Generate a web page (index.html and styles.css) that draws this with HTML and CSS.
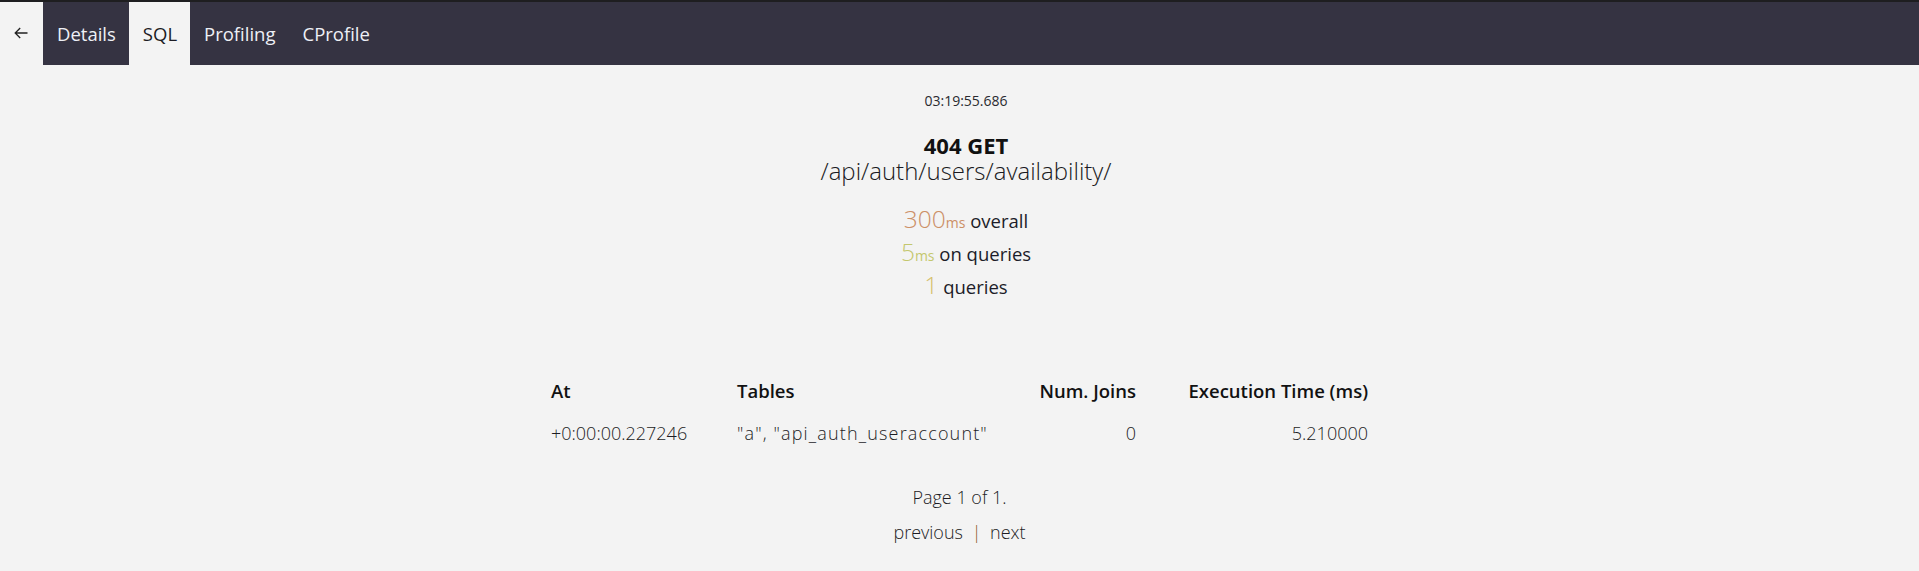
FILE: index.html
```html
<!DOCTYPE html>
<html>
<head>
<meta charset="utf-8">
<link rel="stylesheet" href="styles.css">
</head>
<body>
<nav class="topbar">
  <a class="back" href="#"><svg width="14" height="12" viewBox="0 0 14 12"><path d="M13.5 6H1.2M6.2 1L1.2 6L6.2 11" fill="none" stroke="#222" stroke-width="1.3"/></svg></a>
  <a class="tab" href="#">Details</a>
  <a class="tab active" href="#">SQL</a>
  <a class="tab" href="#">Profiling</a>
  <a class="tab" href="#">CProfile</a>
</nav>
<section class="summary">
  <div class="time">03:19:55.686</div>
  <div class="status">404 GET</div>
  <div class="path">/api/auth/users/availability/</div>
  <div class="stats">
    <div class="stat"><span class="num overall">300</span><span class="unit overall">ms</span> overall</div>
    <div class="stat"><span class="num onq">5</span><span class="unit onq">ms</span> on queries</div>
    <div class="stat"><span class="num qcount">1</span> queries</div>
  </div>
</section>
<table class="sql">
  <colgroup><col class="c1"><col class="c2"><col class="c3"><col class="c4"></colgroup>
  <thead>
    <tr><th>At</th><th>Tables</th><th class="r">Num. Joins</th><th class="r">Execution Time (ms)</th></tr>
  </thead>
  <tbody>
    <tr><td>+0:00:00.227246</td><td class="tables">"a", "api_auth_useraccount"</td><td class="r">0</td><td class="r">5.210000</td></tr>
  </tbody>
</table>
<div class="pager">
  <div class="pageinfo">Page 1 of 1.</div>
  <div class="links"><a href="#">previous</a> <span class="sep">|</span> <a href="#">next</a></div>
</div>
</body>
</html>
```
FILE: styles.css
```css
html, body {
  margin: 0;
  padding: 0;
  background: #f3f3f3;
  font-family: "Open Sans", "Noto Sans", sans-serif;
  color: #1c1c24;
}
a { color: inherit; text-decoration: none; }

.topbar {
  display: flex;
  height: 63px;
  border-top: 2px solid #1e1e20;
  background: #353342;
}
.back {
  width: 43px;
  background: #f3f3f3;
  display: flex;
  align-items: center;
  justify-content: center;
}
.back svg { margin-left: -1px; margin-top: -2px; }
.tab {
  display: flex;
  align-items: center;
  padding: 0 13px 0 14px;
  font-size: 18.5px;
  color: #eef0f6;
}
.tab.active {
  background: #f3f3f3;
  color: #1c1c24;
}

.summary {
  text-align: center;
  padding-left: 13px;
  margin-top: 26px;
}
.time {
  font-size: 14px;
  line-height: 20px;
  color: #2a2a30;
}
.status {
  margin-top: 22px;
  font-size: 22px;
  font-weight: 700;
  line-height: 24px;
  color: #111;
}
.path {
  margin-top: 1px;
  font-size: 24px;
  font-weight: 300;
  line-height: 26px;
  color: #1a1a22;
}
.stats { margin-top: 20px; }
.stat {
  height: 33px;
  line-height: 33px;
  font-size: 18.5px;
  color: #1c1c28;
}
.stat span { line-height: 1; }
.num { font-size: 24.5px; font-weight: 300; }
.unit { font-size: 14px; }
.overall { color: #cc8f66; }
.onq { color: #c4c76e; }
.qcount { color: #d6c06c; }

.sql {
  margin: 67px auto 0;
  border-collapse: collapse;
  table-layout: fixed;
  width: 817px;
}
.c1 { width: 186px; }
.c2 { width: 263px; }
.c3 { width: 136px; }
.c4 { width: 232px; }
.sql th, .sql td { padding: 0; text-align: left; white-space: nowrap; }
.sql th {
  height: 40px;
  font-size: 18.5px;
  font-weight: 600;
  color: #111;
}
.sql td {
  height: 46px;
  font-size: 18px;
  font-weight: 300;
  color: #1c1c24;
}
.sql td.tables { letter-spacing: 1.15px; }
.sql .r { text-align: right; }

.pager {
  text-align: center;
  margin-top: 26px;
}
.pageinfo, .links {
  font-size: 18px;
  font-weight: 300;
  line-height: 30px;
}
.links { margin-top: 5px; }
.sep { color: #8a5a2a; margin: 0 4px; }
```
